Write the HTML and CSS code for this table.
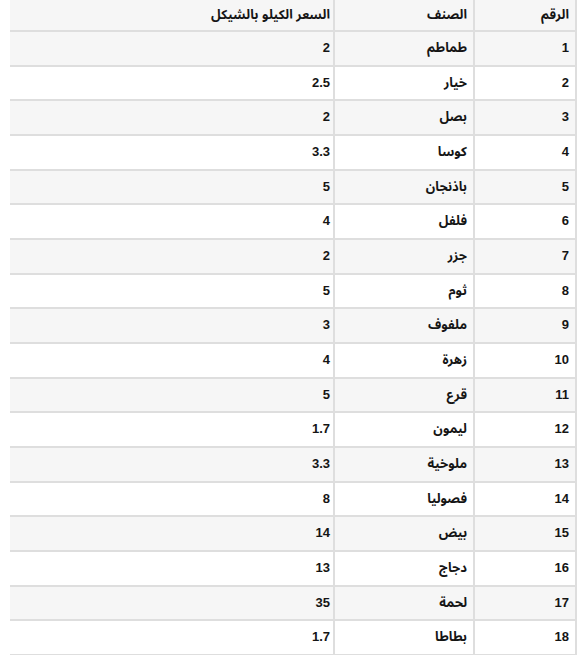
FILE: index.html
```html
<!DOCTYPE html>
<html lang="ar" dir="rtl">
<head>
<meta charset="utf-8">
<title>أسعار الخضار</title>
<link rel="stylesheet" href="styles.css">
</head>
<body>
<div class="wrap">
<table class="prices">
<thead>
<tr><th class="c-num">الرقم</th><th class="c-item">الصنف</th><th class="c-price">السعر الكيلو بالشيكل</th></tr>
</thead>
<tbody>
<tr><td class="c-num">1</td><td class="c-item">طماطم</td><td class="c-price">2</td></tr>
<tr><td class="c-num">2</td><td class="c-item">خيار</td><td class="c-price">2.5</td></tr>
<tr><td class="c-num">3</td><td class="c-item">بصل</td><td class="c-price">2</td></tr>
<tr><td class="c-num">4</td><td class="c-item">كوسا</td><td class="c-price">3.3</td></tr>
<tr><td class="c-num">5</td><td class="c-item">باذنجان</td><td class="c-price">5</td></tr>
<tr><td class="c-num">6</td><td class="c-item">فلفل</td><td class="c-price">4</td></tr>
<tr><td class="c-num">7</td><td class="c-item">جزر</td><td class="c-price">2</td></tr>
<tr><td class="c-num">8</td><td class="c-item">ثوم</td><td class="c-price">5</td></tr>
<tr><td class="c-num">9</td><td class="c-item">ملفوف</td><td class="c-price">3</td></tr>
<tr><td class="c-num">10</td><td class="c-item">زهرة</td><td class="c-price">4</td></tr>
<tr><td class="c-num">11</td><td class="c-item">قرع</td><td class="c-price">5</td></tr>
<tr><td class="c-num">12</td><td class="c-item">ليمون</td><td class="c-price">1.7</td></tr>
<tr><td class="c-num">13</td><td class="c-item">ملوخية</td><td class="c-price">3.3</td></tr>
<tr><td class="c-num">14</td><td class="c-item">فصوليا</td><td class="c-price">8</td></tr>
<tr><td class="c-num">15</td><td class="c-item">بيض</td><td class="c-price">14</td></tr>
<tr><td class="c-num">16</td><td class="c-item">دجاج</td><td class="c-price">13</td></tr>
<tr><td class="c-num">17</td><td class="c-item">لحمة</td><td class="c-price">35</td></tr>
<tr><td class="c-num">18</td><td class="c-item">بطاطا</td><td class="c-price">1.7</td></tr>
</tbody>
</table>
</div>
</body>
</html>
```
FILE: styles.css
```css
html, body {
  margin: 0;
  padding: 0;
  background: #ffffff;
}

.wrap {
  padding: 0 4px 0 10px;
}

.prices {
  direction: rtl;
  width: 567px;
  border-collapse: separate;
  border-spacing: 0;
  table-layout: fixed;
  font-family: "Liberation Sans", "Noto Sans Arabic", "Noto Naskh Arabic", "DejaVu Sans", sans-serif;
  font-size: 13px;
  font-weight: bold;
  color: #151515;
}

.prices th,
.prices td {
  box-sizing: border-box;
  padding: 0 6px;
  text-align: right;
  border-bottom: 2px solid #dedede;
  border-left: 2px solid #dedede;
  white-space: nowrap;
}

.prices th {
  height: 32px;
  line-height: 30px;
  background: #f6f6f6;
}

.prices td {
  line-height: 32.67px;
}

.prices tbody tr:nth-child(odd) td {
  background: #f6f6f6;
}

.prices .c-num {
  width: 104px;
  border-right: 2px solid #dedede;
}

.prices .c-item {
  width: 140px;
}

.prices .c-price {
  width: 323px;
  border-left: none;
  padding-right: 3px;
}
```
